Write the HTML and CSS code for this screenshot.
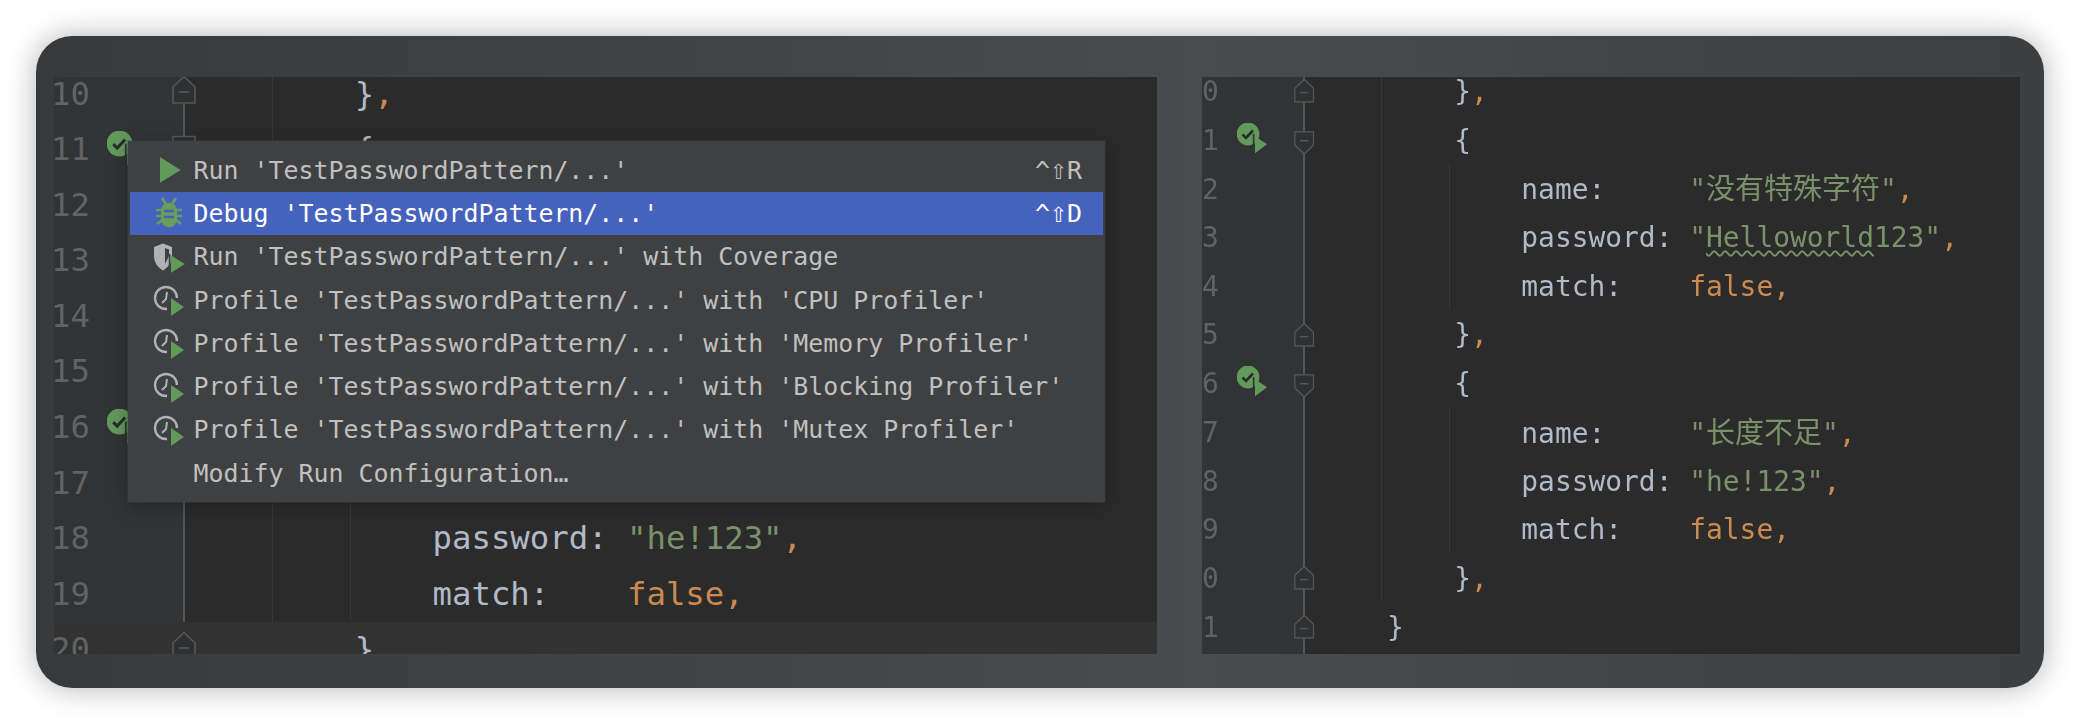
FILE: index.html
```html
<!DOCTYPE html>
<html lang="en">
<head>
<meta charset="utf-8">
<title>Run gutter menu</title>
<link rel="stylesheet" href="styles.css">
</head>
<body>
<svg class="defs" aria-hidden="true">
  <symbol id="fold-end" viewBox="0 0 24 31"><path d="M12 .5 23 11v16H1V11Z" class="fm"/><path d="M7 16h10" class="fm"/></symbol>
  <symbol id="fold-start" viewBox="0 0 24 31"><path d="M1 4.500h22V20L12 30.500 1 20Z" class="fm"/><path d="M7 15h10" class="fm"/></symbol>
  <symbol id="ok-run" viewBox="0 0 30 36">
    <circle cx="11" cy="11" r="11.400" fill="#629a5c"/>
    <path d="M5.500 11.500 9 15l7-7.500" fill="none" stroke="#2b2b2b" stroke-width="2.600"/>
    <path d="M18 13.300v17l12-9Z" fill="#629a5c"/>
    <path d="M16.600 11v20" stroke="#313335" stroke-width="1.600"/>
  </symbol>
  <symbol id="play" viewBox="0 0 36 36"><path d="M10 5v25.700L30.700 18Z" fill="#629a5c"/></symbol>
  <symbol id="bug" viewBox="0 0 36 36">
    <path d="M12 3l4 6M26 3l-4 6M6 15h26M6 21h26M7 29l5-4M31 29l-5-4" stroke="#6a9c5c" stroke-width="2.600" fill="none"/>
    <path d="M11 15a8 7 0 0 1 16 0v9a8 8.500 0 0 1-16 0Z" fill="#6a9c5c"/>
    <path d="M14 16h10M14 22h10" stroke="#4562bd" stroke-width="2.400"/>
  </symbol>
  <symbol id="cover" viewBox="0 0 36 36">
    <path d="M4 8l9-3.500L22 8v9c0 7-4.500 11.500-9 14.500C8 28.500 4 24 4 17Z" fill="#afb1b3"/>
    <path d="M15 9l4 1.500V17l-4 8Z" fill="#3f4042"/>
    <path d="M21 16.400V33.700L35 25Z" fill="#629a5c"/>
    <path d="M19.600 15v19" stroke="#3f4042" stroke-width="1.800"/>
  </symbol>
  <symbol id="prof" viewBox="0 0 36 36">
    <circle cx="16" cy="16" r="11" fill="none" stroke="#afb1b3" stroke-width="2.400"/>
    <path d="M17 10l-1 7-4 4" fill="none" stroke="#afb1b3" stroke-width="2"/>
    <path d="M19.500 16h9.500v14H17V21Z" fill="#3f4042"/>
    <path d="M21 16v18l13-9Z" fill="#629a5c"/>
  </symbol>
</svg>

<main class="window">
  <section class="panel panel-a">
    <i class="fold-line"></i><i class="guide ga1"></i><i class="guide ga2"></i>
    <div class="rows">
      <div class="row"><span class="num">10</span><span></span><span></span><svg class="fold"><use href="#fold-end"/></svg><span class="code">    }<b class="k">,</b></span></div>
      <div class="row"><span class="num">11</span><svg class="ok"><use href="#ok-run"/></svg><span></span><svg class="fold"><use href="#fold-start"/></svg><span class="code">    {</span></div>
      <div class="row"><span class="num">12</span></div>
      <div class="row"><span class="num">13</span></div>
      <div class="row"><span class="num">14</span></div>
      <div class="row"><span class="num">15</span></div>
      <div class="row"><span class="num">16</span><svg class="ok"><use href="#ok-run"/></svg></div>
      <div class="row"><span class="num">17</span></div>
      <div class="row"><span class="num">18</span><span></span><span></span><span></span><span class="code">        password: <b class="s">"he!123"</b><b class="k">,</b></span></div>
      <div class="row"><span class="num">19</span><span></span><span></span><span></span><span class="code">        match:    <b class="k">false,</b></span></div>
      <div class="row current"><span class="num">20</span><span></span><span></span><svg class="fold"><use href="#fold-end"/></svg><span class="code">    }</span></div>
    </div>
  </section>

  <section class="panel panel-b">
    <i class="fold-line"></i><i class="guide gb1"></i><i class="guide gb2"></i><i class="guide gb3"></i>
    <div class="rows">
      <div class="row"><span class="num">0</span><span></span><span></span><svg class="fold"><use href="#fold-end"/></svg><span class="code">    }<b class="k">,</b></span></div>
      <div class="row"><span class="num">1</span><svg class="ok"><use href="#ok-run"/></svg><span></span><svg class="fold"><use href="#fold-start"/></svg><span class="code">    {</span></div>
      <div class="row"><span class="num">2</span><span></span><span></span><span></span><span class="code">        name:     <b class="s">"<span class="cjk">没有特殊字符</span>"</b><b class="k">,</b></span></div>
      <div class="row"><span class="num">3</span><span></span><span></span><span></span><span class="code">        password: <b class="s">"<u class="typo">Helloworld</u>123"</b><b class="k">,</b></span></div>
      <div class="row"><span class="num">4</span><span></span><span></span><span></span><span class="code">        match:    <b class="k">false,</b></span></div>
      <div class="row"><span class="num">5</span><span></span><span></span><svg class="fold"><use href="#fold-end"/></svg><span class="code">    }<b class="k">,</b></span></div>
      <div class="row"><span class="num">6</span><svg class="ok"><use href="#ok-run"/></svg><span></span><svg class="fold"><use href="#fold-start"/></svg><span class="code">    {</span></div>
      <div class="row"><span class="num">7</span><span></span><span></span><span></span><span class="code">        name:     <b class="s">"<span class="cjk">长度不足</span>"</b><b class="k">,</b></span></div>
      <div class="row"><span class="num">8</span><span></span><span></span><span></span><span class="code">        password: <b class="s">"he!123"</b><b class="k">,</b></span></div>
      <div class="row"><span class="num">9</span><span></span><span></span><span></span><span class="code">        match:    <b class="k">false,</b></span></div>
      <div class="row"><span class="num">0</span><span></span><span></span><svg class="fold"><use href="#fold-end"/></svg><span class="code">    }<b class="k">,</b></span></div>
      <div class="row"><span class="num">1</span><span></span><span></span><svg class="fold"><use href="#fold-end"/></svg><span class="code">}</span></div>
    </div>
  </section>

  <div class="popup">
    <div class="item"><svg class="ic"><use href="#play"/></svg><span class="label">Run 'TestPasswordPattern/...'</span><span class="keys">^<span class="shift">⇧</span>R</span></div>
    <div class="item sel"><svg class="ic"><use href="#bug"/></svg><span class="label">Debug 'TestPasswordPattern/...'</span><span class="keys">^<span class="shift">⇧</span>D</span></div>
    <div class="item"><svg class="ic"><use href="#cover"/></svg><span class="label">Run 'TestPasswordPattern/...' with Coverage</span></div>
    <div class="item"><svg class="ic"><use href="#prof"/></svg><span class="label">Profile 'TestPasswordPattern/...' with 'CPU Profiler'</span></div>
    <div class="item"><svg class="ic"><use href="#prof"/></svg><span class="label">Profile 'TestPasswordPattern/...' with 'Memory Profiler'</span></div>
    <div class="item"><svg class="ic"><use href="#prof"/></svg><span class="label">Profile 'TestPasswordPattern/...' with 'Blocking Profiler'</span></div>
    <div class="item"><svg class="ic"><use href="#prof"/></svg><span class="label">Profile 'TestPasswordPattern/...' with 'Mutex Profiler'</span></div>
    <div class="item"><span class="ic"></span><span class="label">Modify Run Configuration…</span></div>
  </div>
</main>
</body>
</html>
```

FILE: styles.css
```css
html, body { margin: 0; background: #fff; }
body { width: 2080px; height: 724px; padding: 36px; box-sizing: border-box; overflow: hidden; }
.defs { display: none; }
.fm { fill: #2f3032; stroke: #565656; stroke-width: 1.6; }

.window {
  position: relative;
  display: flex;
  gap: 45px;
  height: 652px;
  width: 2008px;
  padding: 41px 24px 34px 18px;
  box-sizing: border-box;
  border-radius: 36px;
  background: linear-gradient(90deg, #38393b 0%, #4a4b4e 58%, #3d3e40 100%);
  box-shadow: 0 0 30px rgba(0, 0, 0, .3);
  font-family: "DejaVu Sans Mono", "Noto Sans CJK SC", monospace;
  filter: blur(.45px);
}

.panel { position: relative; overflow: hidden; flex: none; }
.panel-a { width: 1103px; font-size: 32.3px; background: linear-gradient(90deg, #313335 130px, #2b2b2b 130px); }
.panel-b { width: 818px; font-size: 27.9px; background: linear-gradient(90deg, #313335 102px, #2b2b2b 102px); }

.rows { position: relative; }
.panel-a .rows { margin-top: -10.5px; }
.panel-b .rows { margin-top: -9px; }

.row { display: grid; align-items: center; white-space: pre; color: #b0bac8; }
.panel-a .row { height: 55.6px; line-height: 55.6px; grid-template-columns: 53px 26px 39px 24px 1fr; }
.panel-b .row { height: 48.7px; line-height: 48.7px; grid-template-columns: 35px 30px 27px 20.4px 1fr; }
.row.current { background: #323232; }

.num { color: #606366; }
.panel-a .num { margin-left: -3px; }

.code { display: block; }
.panel-a .code { padding-left: 81px; }
.panel-b .code { padding-left: 72.6px; }

b { font-weight: 400; }
.k { color: #cb8a50; }
.s { color: #7a9269; }
.cjk { font-size: 29px; }
.typo { text-decoration: underline wavy #7a9269 1.5px; text-underline-offset: 3px; }

.fold { display: block; overflow: visible; }
.panel-a .fold { width: 24px; height: 31px; margin-top: -5px; }
.panel-b .fold { width: 20.4px; height: 26.4px; }

.ok { display: block; overflow: visible; }
.panel-a .ok { width: 34px; height: 41px; margin-top: 3px; }
.panel-b .ok { width: 30px; height: 36px; }

.fold-line { position: absolute; top: 0; bottom: 0; width: 1.4px; background: #565656; }
.panel-a .fold-line { left: 129.4px; }
.panel-b .fold-line { left: 101.4px; }

.guide { position: absolute; width: 1px; background: #383838; }
.ga1 { left: 218px; top: 0; bottom: 0; }
.ga2 { left: 296px; top: 90px; height: 454px; }
.gb1 { left: 179px; top: 0; height: 523px; }
.gb2 { left: 247px; top: 86px; height: 147px; }
.gb3 { left: 247px; top: 330px; height: 146px; }

.popup {
  position: absolute;
  left: 92px;
  top: 105px;
  width: 976.5px;
  box-sizing: border-box;
  padding: 7.500px 1.500px;
  background: #3f4042;
  box-shadow: 0 0 0 1px #45464850, 0 4px 18px rgba(0, 0, 0, .28);
  font-size: 24.92px;
  color: #c0c0c0;
}
.item { display: flex; align-items: center; height: 43.3px; padding: 0 21px 0 20.500px; box-sizing: border-box; white-space: pre; }
.ic { flex: none; display: block; width: 36px; height: 36px; margin-right: 7.500px; }
.label { flex: 1; }
.keys { display: flex; align-items: center; }
.shift { display: block; width: 17px; text-align: center; font-size: 28px; line-height: 30px; }
.sel { background: #4562bd; color: #fff; }
```
